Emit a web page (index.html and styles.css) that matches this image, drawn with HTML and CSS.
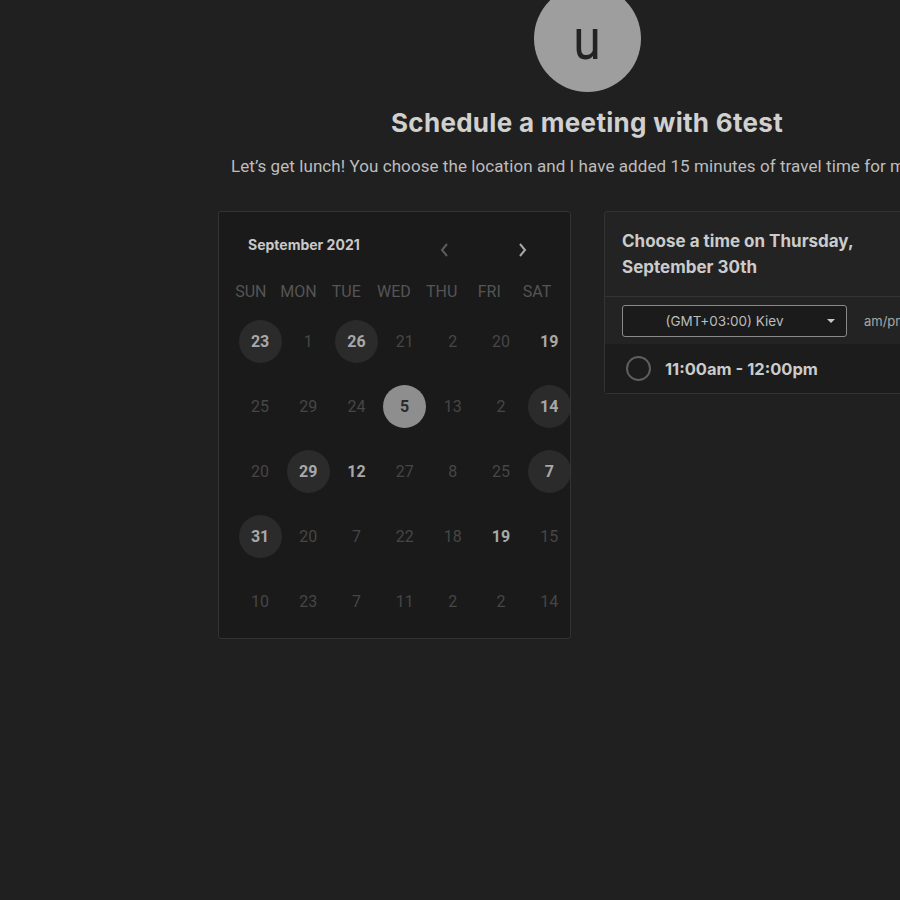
FILE: index.html
```html
<!DOCTYPE html>
<html lang="en">
<head>
<meta charset="utf-8">
<title>Schedule a meeting with 6test</title>
<link rel="stylesheet" href="styles.css">
</head>
<body>
<div class="page">
  <div class="avatar"><span class="avatar-letter">u</span></div>
  <h1 class="title">Schedule a meeting with 6test</h1>
  <p class="subtitle">Let’s get lunch! You choose the location and I have added 15 minutes of travel time for me.</p>

  <div class="panels">
    <section class="calendar">
      <div class="cal-head">
        <span class="month">September 2021</span>
        <div class="nav">
          <svg class="arrow prev" width="10" height="16" viewBox="0 0 10 16"><path d="M8 2 L3 8 L8 14" fill="none" stroke="currentColor" stroke-width="2"/></svg>
          <svg class="arrow next" width="10" height="16" viewBox="0 0 10 16"><path d="M2 2 L7 8 L2 14" fill="none" stroke="currentColor" stroke-width="2"/></svg>
        </div>
      </div>
      <div class="weekdays">
        <span>SUN</span><span>MON</span><span>TUE</span><span>WED</span><span>THU</span><span>FRI</span><span>SAT</span>
      </div>
      <div class="dates">
        <span class="d avail">23</span><span class="d">1</span><span class="d avail">26</span><span class="d">21</span><span class="d">2</span><span class="d">20</span><span class="d bold">19</span>
        <span class="d">25</span><span class="d">29</span><span class="d">24</span><span class="d selected">5</span><span class="d">13</span><span class="d">2</span><span class="d avail">14</span>
        <span class="d">20</span><span class="d avail">29</span><span class="d bold">12</span><span class="d">27</span><span class="d">8</span><span class="d">25</span><span class="d avail">7</span>
        <span class="d avail">31</span><span class="d">20</span><span class="d">7</span><span class="d">22</span><span class="d">18</span><span class="d bold">19</span><span class="d">15</span>
        <span class="d">10</span><span class="d">23</span><span class="d">7</span><span class="d">11</span><span class="d">2</span><span class="d">2</span><span class="d">14</span>
      </div>
    </section>

    <section class="times">
      <h2 class="times-head">Choose a time on Thursday, September 30th</h2>
      <div class="tz-row">
        <div class="tz-select">
          <span class="tz-label">(GMT+03:00) Kiev</span>
          <span class="caret"></span>
        </div>
        <span class="ampm">am/pm</span>
      </div>
      <div class="slot">
        <span class="radio"></span>
        <span class="slot-time">11:00am - 12:00pm</span>
      </div>
    </section>
  </div>
</div>
</body>
</html>
```

FILE: styles.css
```css
html, body {
  margin: 0;
  padding: 0;
  background: #202020;
  height: 100%;
  overflow: hidden;
}

body {
  font-family: "Inter", "Liberation Sans", sans-serif;
  color: #cccccc;
}

.page {
  width: 738px;
  margin-left: 218px;
  display: flex;
  flex-direction: column;
  align-items: center;
}

.avatar {
  width: 107px;
  height: 107px;
  margin-top: -15px;
  border-radius: 50%;
  background: #9e9e9e;
  display: flex;
  justify-content: center;
}

.avatar-letter {
  display: block;
  color: #232323;
  font-family: "Roboto", sans-serif;
  font-size: 58px;
  line-height: 100px;
  margin-top: 4px;
  transform: scaleX(0.86);
}

.title {
  margin: 15px 0 0;
  font-size: 26px;
  font-weight: 700;
  line-height: 32px;
  color: #d0d0d0;
  letter-spacing: 0.3px;
  white-space: nowrap;
}

.subtitle {
  align-self: flex-start;
  margin: 15px 0 0 13px;
  font-family: "Roboto", sans-serif;
  font-size: 17px;
  line-height: 24px;
  color: #bdbdbd;
  letter-spacing: 0.07px;
  white-space: nowrap;
}

.panels {
  align-self: stretch;
  margin-top: 33px;
  display: flex;
  gap: 33px;
  align-items: flex-start;
}

/* Calendar */
.calendar {
  width: 353px;
  box-sizing: border-box;
  height: 428px;
  background: #1a1a1a;
  border: 1px solid #333333;
  border-radius: 3px;
  overflow: hidden;
}

.cal-head {
  height: 64px;
  display: flex;
  align-items: center;
  padding-left: 29px;
}

.month {
  font-size: 14px;
  font-weight: 700;
  color: #c8c8c8;
}

.nav {
  display: flex;
  gap: 69px;
  margin-left: 79px;
  margin-top: 11px;
}

.arrow.prev { color: #5c5c5c; }
.arrow.next { color: #a8a8a8; }

.weekdays {
  display: grid;
  grid-template-columns: repeat(7, 47.7px);
  height: 30px;
  padding-left: 8px;
  align-items: center;
  font-family: "Roboto", sans-serif;
  font-size: 16px;
  color: #555555;
  text-align: center;
}

.dates {
  display: grid;
  grid-template-columns: repeat(7, 48.2px);
  grid-auto-rows: 65px;
  margin-top: 3px;
  padding-left: 17px;
  align-items: center;
  justify-items: center;
  font-family: "Roboto", sans-serif;
  font-size: 16px;
  color: #464646;
}

.d {
  width: 43px;
  height: 43px;
  border-radius: 50%;
  display: flex;
  align-items: center;
  justify-content: center;
}

.d.avail {
  background: #2b2b2b;
  color: #a8a8a8;
  font-weight: 700;
}

.d.bold {
  color: #a8a8a8;
  font-weight: 700;
}

.d.selected {
  background: #8e8e8e;
  color: #2a2a2a;
  font-weight: 700;
}

/* Times panel */
.times {
  width: 352px;
  flex: none;
  box-sizing: border-box;
  background: #232323;
  border: 1px solid #333333;
  border-radius: 3px;
}

.times-head {
  margin: 0;
  padding: 16px 17px 16px;
  font-size: 17px;
  font-weight: 700;
  line-height: 26px;
  color: #cbcbcb;
  border-bottom: 1px solid #333333;
}

.tz-row {
  display: flex;
  align-items: center;
  gap: 17px;
  padding: 8px 17px 7px;
}

.tz-select {
  width: 225px;
  height: 32px;
  box-sizing: border-box;
  border: 1px solid #8a8a8a;
  border-radius: 3px;
  background: #1b1b1b;
  display: flex;
  align-items: center;
  position: relative;
}

.tz-label {
  flex: 1;
  text-align: center;
  font-size: 13.5px;
  color: #bcbcbc;
  padding-right: 20px;
  margin-top: -1px;
}

.caret {
  position: absolute;
  right: 11px;
  top: 13px;
  width: 0;
  height: 0;
  border-left: 4px solid transparent;
  border-right: 4px solid transparent;
  border-top: 4px solid #c8c8c8;
}

.ampm {
  font-size: 13px;
  color: #a8a8a8;
}

.slot {
  height: 49px;
  background: #1c1c1c;
  display: flex;
  align-items: center;
  padding-left: 21px;
  gap: 14px;
}

.radio {
  width: 21px;
  height: 21px;
  border: 2px solid #5e5e5e;
  border-radius: 50%;
}

.slot-time {
  font-size: 16.5px;
  font-weight: 700;
  color: #cbcbcb;
}
```
